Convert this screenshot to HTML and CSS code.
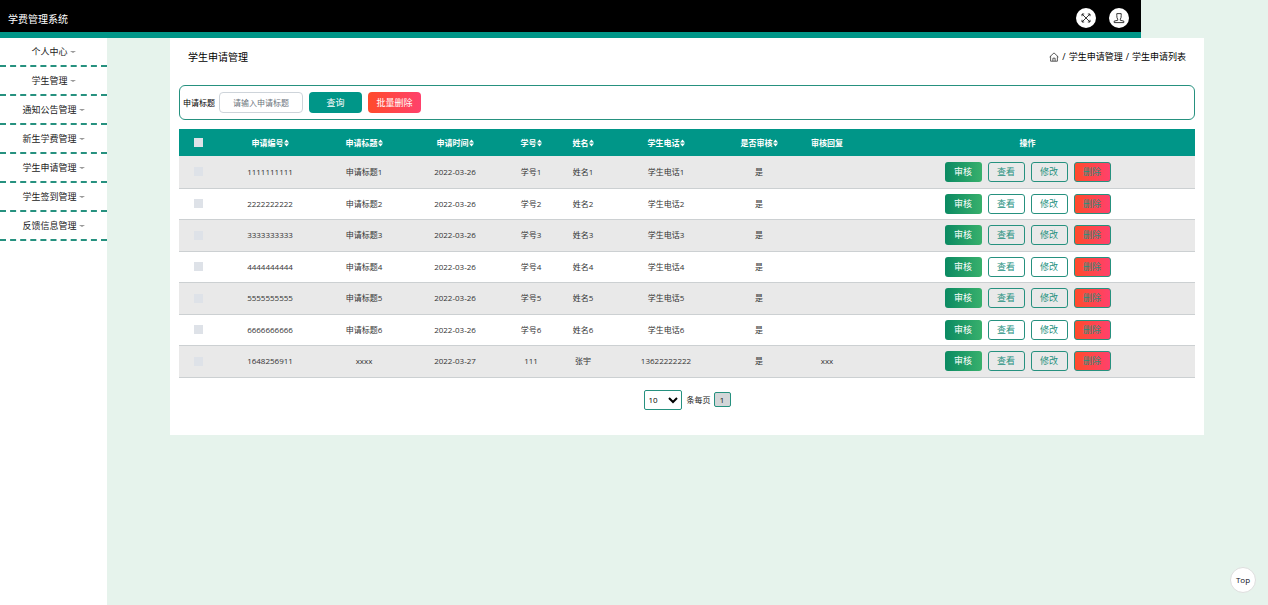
FILE: index.html
```
<!DOCTYPE html>
<html lang="zh-CN">
<head>
    <meta charset="UTF-8">
    <meta name="viewport" content="width=device-width, initial-scale=1.0">
    <title>学费管理系统</title>
    <link rel="stylesheet" href="styles.css">
</head>
<body>
    <!-- Shared icons -->
    <svg class="icon-defs" aria-hidden="true">
        <symbol id="icon-sort" viewBox="0 0 5 8">
            <path d="M2.5 0.5 5 3.5H0zM2.5 7.5 0 4.5h5z" fill="currentColor"/>
        </symbol>
    </svg>

    <header class="navbar">
        <h1 class="brand">学费管理系统</h1>
        <div class="nav-actions">
            <button type="button" class="round-btn" aria-label="全屏">
                <svg width="12" height="12" viewBox="0 0 12 12" fill="none" stroke="#222" stroke-width="0.9">
                    <path d="M2 4.2V2h2.2M7.8 2H10v2.2M10 7.8V10H7.8M4.2 10H2V7.8M2 2l3 3M7 7l3 3M10 2L7 5M5 7l-3 3M5 5l2 2M7 5L5 7"/>
                </svg>
            </button>
            <button type="button" class="round-btn" aria-label="用户">
                <svg width="12" height="12" viewBox="0 0 12 12" fill="none" stroke="#222" stroke-width="0.9">
                    <path d="M4.700 7.200C4 6.500 3.800 5 3.800 3.600V1.600h4.400v2C8.200 5 8 6.500 7.300 7.200v1.100l3.500.8v1.500H1.200V9.100l3.500-.8z"/>
                </svg>
            </button>
        </div>
    </header>

    <div class="wrapper">
        <nav class="sidebar">
            <ul>
                <li><a href="#">个人中心<span class="caret"></span></a></li>
                <li><a href="#">学生管理<span class="caret"></span></a></li>
                <li><a href="#">通知公告管理<span class="caret"></span></a></li>
                <li><a href="#">新生学费管理<span class="caret"></span></a></li>
                <li><a href="#">学生申请管理<span class="caret"></span></a></li>
                <li><a href="#">学生签到管理<span class="caret"></span></a></li>
                <li><a href="#">反馈信息管理<span class="caret"></span></a></li>
            </ul>
        </nav>

        <main class="content">
            <div class="card">
                <div class="page-title">
                    <h2>学生申请管理</h2>
                    <div class="breadcrumb">
                        <a href="#" aria-label="首页">
                            <svg width="10" height="10" viewBox="0 0 10 10" fill="none" stroke="#333" stroke-width="0.8">
                                <path d="M0.600 5 5 0.900 9.400 5M1.600 4.200v5h6.800v-5M3.900 9.200V6.200h2.200v3"/>
                            </svg>
                        </a>
                        <span>/</span>
                        <a href="#">学生申请管理</a>
                        <span>/</span>
                        <span>学生申请列表</span>
                    </div>
                </div>

                <form class="search-bar">
                    <label for="title">申请标题</label>
                    <input type="text" id="title" placeholder="请输入申请标题">
                    <button type="button" class="btn-search">查询</button>
                    <button type="button" class="btn-batch">批量删除</button>
                </form>

                <table>
                    <colgroup>
                        <col class="col-check">
                        <col class="col-id">
                        <col class="col-title">
                        <col class="col-date">
                        <col class="col-no">
                        <col class="col-name">
                        <col class="col-phone">
                        <col class="col-state">
                        <col class="col-reply">
                        <col>
                    </colgroup>
                    <thead>
                        <tr>
                            <th><input type="checkbox" aria-label="全选"></th>
                            <th>申请编号<svg class="sort"><use href="#icon-sort"/></svg></th>
                            <th>申请标题<svg class="sort"><use href="#icon-sort"/></svg></th>
                            <th>申请时间<svg class="sort"><use href="#icon-sort"/></svg></th>
                            <th>学号<svg class="sort"><use href="#icon-sort"/></svg></th>
                            <th>姓名<svg class="sort"><use href="#icon-sort"/></svg></th>
                            <th>学生电话<svg class="sort"><use href="#icon-sort"/></svg></th>
                            <th>是否审核<svg class="sort"><use href="#icon-sort"/></svg></th>
                            <th>审核回复</th>
                            <th>操作</th>
                        </tr>
                    </thead>
                    <tbody id="rows"></tbody>
                </table>

                <div class="pagination">
                    <select id="page-size">
                        <option>10</option>
                        <option>25</option>
                        <option>50</option>
                    </select>
                    <label for="page-size">条每页</label>
                    <button type="button" class="page-btn">1</button>
                </div>
            </div>
        </main>
    </div>

    <button type="button" class="to-top">Top</button>

    <script>
        const rows = [
            ["1111111111", "申请标题1", "2022-03-26", "学号1", "姓名1", "学生电话1", "是", ""],
            ["2222222222", "申请标题2", "2022-03-26", "学号2", "姓名2", "学生电话2", "是", ""],
            ["3333333333", "申请标题3", "2022-03-26", "学号3", "姓名3", "学生电话3", "是", ""],
            ["4444444444", "申请标题4", "2022-03-26", "学号4", "姓名4", "学生电话4", "是", ""],
            ["5555555555", "申请标题5", "2022-03-26", "学号5", "姓名5", "学生电话5", "是", ""],
            ["6666666666", "申请标题6", "2022-03-26", "学号6", "姓名6", "学生电话6", "是", ""],
            ["1648256911", "xxxx", "2022-03-27", "111", "张宇", "13622222222", "是", "xxx"]
        ];

        // Build one table row per application
        document.getElementById("rows").innerHTML = rows.map(row => `
            <tr>
                <td><input type="checkbox" aria-label="选择 ${row[0]}"></td>
                ${row.map(cell => `<td>${cell}</td>`).join("")}
                <td>
                    <div class="actions">
                        <button type="button" class="btn-audit">审核</button>
                        <button type="button">查看</button>
                        <button type="button">修改</button>
                        <button type="button" class="btn-delete">删除</button>
                    </div>
                </td>
            </tr>`).join("");
    </script>
</body>
</html>
```

FILE: styles.css
```
* {
    box-sizing: border-box;
}

body {
    margin: 0;
    min-height: 100vh;
    display: flex;
    flex-direction: column;
    font-family: "Open Sans", "Noto Sans CJK SC", sans-serif;
    font-size: 9px;
    line-height: 12px;
    color: #222;
    background-color: #e6f3ec;
}

a {
    color: inherit;
    text-decoration: none;
}

button,
input,
select {
    font-family: inherit;
    font-size: 9px;
    line-height: 12px;
    margin: 0;
    padding: 0;
}

button {
    cursor: pointer;
}

.icon-defs {
    position: absolute;
    width: 0;
    height: 0;
}

/* Top bar */
.navbar {
    width: 90%;
    height: 38px;
    padding: 0 12px 0 8px;
    display: flex;
    align-items: center;
    justify-content: space-between;
    background-color: #000;
    border-bottom: 6px solid #009688;
}

.brand {
    margin: 0;
    padding-top: 6px;
    font-size: 10px;
    font-weight: 400;
    color: #fff;
}

.nav-actions {
    display: flex;
    gap: 13px;
    padding-top: 4px;
}

.round-btn {
    width: 20px;
    height: 20px;
    display: flex;
    align-items: center;
    justify-content: center;
    background: #fff;
    border: none;
    border-radius: 50%;
}

.wrapper {
    flex: 1;
    display: flex;
}

/* Sidebar */
.sidebar {
    width: 107px;
    flex-shrink: 0;
    background: #fff;
}

.sidebar ul {
    list-style: none;
    margin: 0;
    padding: 0;
}

.sidebar a {
    height: 29px;
    display: flex;
    align-items: center;
    justify-content: center;
    gap: 2px;
    border-bottom: 2px dashed #26917f;
}

.caret {
    border: 3px solid transparent;
    border-top: 2px solid #999;
    border-bottom: none;
}

/* Content */
.content {
    flex: 1;
    padding: 0 64px 0 63px;
}

.card {
    padding: 0 9px 25px;
    background: #fff;
}

.page-title {
    height: 47px;
    padding: 0 9px 9px;
    display: flex;
    align-items: center;
    justify-content: space-between;
}

.page-title h2 {
    margin: 0;
    font-size: 10px;
    font-weight: 400;
    color: #000;
}

.breadcrumb {
    display: flex;
    align-items: center;
    gap: 3px;
    color: #000;
}

.breadcrumb svg {
    display: block;
}

.search-bar {
    height: 35px;
    margin-bottom: 9px;
    padding: 0 3px;
    display: flex;
    align-items: center;
    border: 1px solid #26917f;
    border-radius: 6px;
}

.search-bar label {
    font-size: 8px;
    color: #000;
}

.search-bar input {
    width: 84px;
    height: 21px;
    margin: 0 6px 0 4px;
    border: 1px solid #ced4da;
    border-radius: 4px;
    font-size: 8px;
    text-align: center;
}

.search-bar input::placeholder {
    color: #6c757d;
}

.btn-search,
.btn-batch {
    width: 53px;
    height: 21px;
    border: none;
    border-radius: 4px;
    color: #fff;
    background: #009688;
}

.btn-batch {
    margin-left: 6px;
    background: linear-gradient(to right, #ff4b2b, #ff416c);
}

/* Table */
table {
    width: 100%;
    table-layout: fixed;
    border-collapse: collapse;
    font-size: 8px;
    text-align: center;
}

.col-check { width: 39px; }
.col-id { width: 104px; }
.col-title { width: 84px; }
.col-date { width: 98px; }
.col-no { width: 54px; }
.col-name { width: 50px; }
.col-phone { width: 116px; }
.col-state { width: 70px; }
.col-reply { width: 66px; }

th,
td {
    padding: 0;
    white-space: nowrap;
}

th {
    height: 27px;
    color: #fff;
    background: #009688;
}

td {
    height: 32px;
    border-bottom: 1px solid #ccd0d2;
    color: #333;
}

tbody tr:nth-child(odd) {
    background: #e9e9e9;
}

tbody tr:nth-child(even) td {
    height: 31px;
}

.sort {
    width: 5px;
    height: 8px;
    vertical-align: -1px;
}

table input {
    appearance: none;
    display: block;
    width: 9px;
    height: 9px;
    margin: 0 auto;
    background: #dee2e8;
}

.actions {
    display: flex;
    justify-content: center;
    gap: 6px;
}

.actions button {
    width: 37px;
    height: 20px;
    border: 1px solid #26917f;
    border-radius: 3px;
    color: #26917f;
    background: transparent;
}

.actions .btn-audit {
    border: none;
    color: #fff;
    background: linear-gradient(to right, #0b8a62, #38b06c);
}

.actions .btn-delete {
    background: linear-gradient(to right, #ff4b2b, #ff416c);
}

/* Pagination */
.pagination {
    margin-top: 12px;
    display: flex;
    align-items: center;
    justify-content: center;
    font-size: 8px;
}

.pagination select {
    width: 38px;
    height: 20px;
    margin-right: 5px;
    border: 1px solid #26917f;
    border-radius: 2px;
    font-size: 8px;
    color: #000;
    background: #fff;
}

.page-btn {
    width: 17px;
    height: 15px;
    margin-left: 3px;
    border: 1px solid #26917f;
    border-radius: 2px;
    font-size: 8px;
    color: #111;
    background: #d3d6d8;
}

.to-top {
    position: fixed;
    right: 12px;
    bottom: 12px;
    width: 26px;
    height: 26px;
    border: 1px solid #ddd;
    border-radius: 50%;
    font-size: 8px;
    color: #112;
    background: #fff;
}
```
